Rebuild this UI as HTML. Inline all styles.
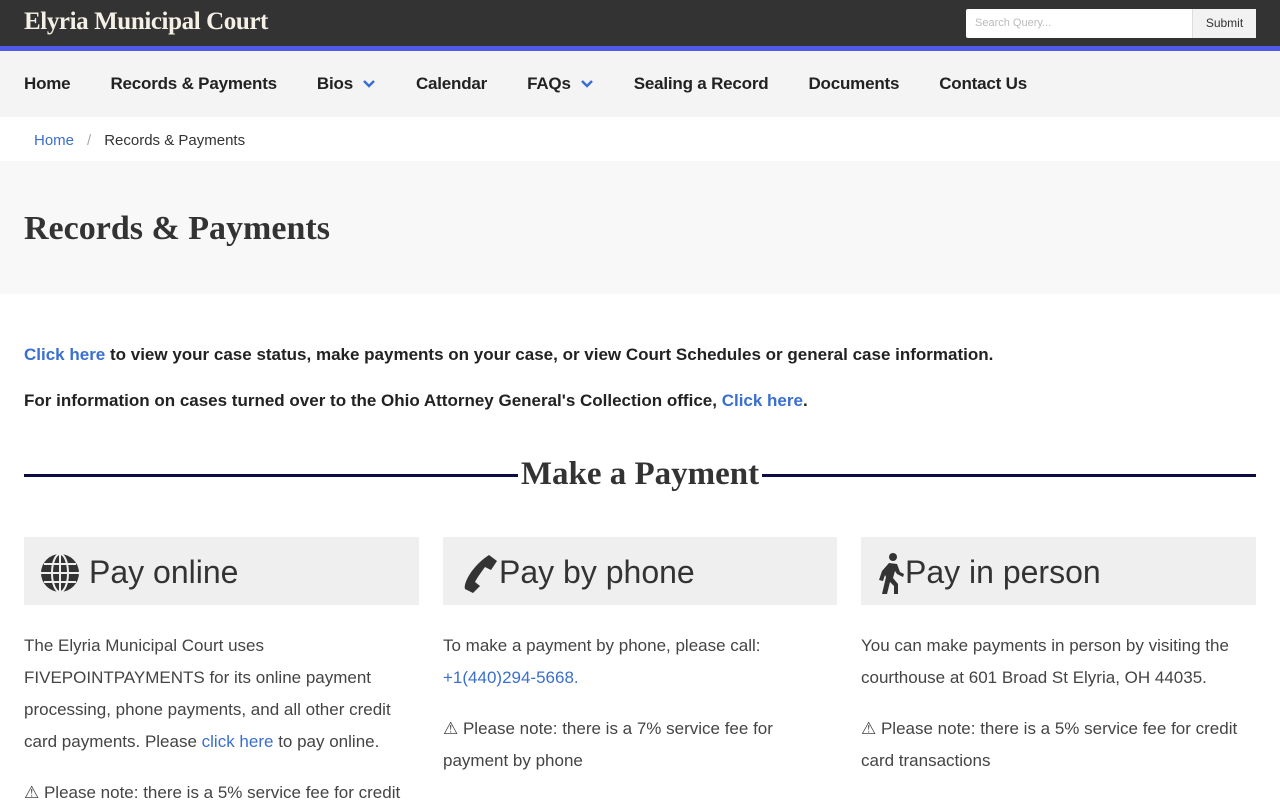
<!DOCTYPE html>
<html><head><meta charset="utf-8"><style>
*{box-sizing:border-box;margin:0;padding:0}
body{width:1280px;height:800px;overflow:hidden;font-family:"Liberation Sans",sans-serif;color:#333;background:#fff}
.top{height:46px;background:#333;position:relative}
.top h1{position:absolute;left:24px;top:8px;font:bold 25px "Liberation Serif",serif;color:#f5f0e6;letter-spacing:-0.4px}
.search{position:absolute;left:966px;top:9px;width:290px;height:29px;background:#fff;border-radius:2px}
.search span{position:absolute;left:9px;top:8px;font-size:11px;color:#bbb}
.search b{position:absolute;right:0;top:0;width:64px;height:29px;background:#f2f2f2;font-weight:normal;font-size:12px;color:#333;text-align:center;line-height:29px;border-left:1px solid #ddd}
.bar{height:5px;background:#4f5be8}
nav{height:66px;background:#f4f4f4;display:flex;align-items:center;padding-left:24px}
nav a{font-weight:bold;font-size:17px;color:#222;margin-right:40px;display:flex;align-items:center;letter-spacing:-0.2px}
nav svg{margin-left:9px}
.bc{height:44px;padding:15px 0 0 34px;font-size:15px}
.bc a{color:#3a6fd0}
.bc i{font-style:normal;color:#aaa;margin:0 13px}
.hero{height:133px;background:#f8f8f8;padding:49px 24px}
.hero h2{font:bold 34px "Liberation Serif",serif;color:#333}
p.l{font-weight:bold;font-size:17px;color:#222;position:absolute;left:24px}
a{color:#3a6fd0;text-decoration:none}
.mk{position:absolute;left:24px;top:458px;width:1232px;height:36px}
.mk hr{position:absolute;top:16px;height:3px;background:#0d0d44;border:0}
.mk h3{position:absolute;left:0;width:100%;text-align:center;font:bold 33px "Liberation Serif",serif;color:#333;top:-2px}
.col{position:absolute;top:537px;width:395px}
.hd{height:68px;background:#efefef;display:flex;align-items:center;padding-left:16px;font-size:32px;color:#333;padding-top:3px}
.col p{font-size:17px;line-height:32px;color:#444;margin-top:25px}
</style></head><body>
<div class="top"><h1>Elyria Municipal Court</h1><div class="search"><span>Search Query...</span><b>Submit</b></div></div>
<div class="bar"></div>
<nav><a>Home</a><a>Records &amp; Payments</a><a>Bios<svg width="14" height="10" viewBox="0 0 14 10"><path d="M2 2l5 5 5-5" stroke="#3a6fd0" stroke-width="2.5" fill="none"/></svg></a><a>Calendar</a><a>FAQs<svg width="14" height="10" viewBox="0 0 14 10"><path d="M2 2l5 5 5-5" stroke="#3a6fd0" stroke-width="2.5" fill="none"/></svg></a><a>Sealing a Record</a><a>Documents</a><a>Contact Us</a></nav>
<div class="bc"><a>Home</a><i>/</i>Records &amp; Payments</div>
<div class="hero"><h2>Records &amp; Payments</h2></div>
<p class="l" style="top:345px"><a>Click here</a> to view your case status, make payments on your case, or view Court Schedules or general case information.</p>
<p class="l" style="top:391px">For information on cases turned over to the Ohio Attorney General's Collection office, <a>Click here</a>.</p>
<div class="mk"><hr style="left:0;width:494px"><hr style="left:738px;width:494px"><h3>Make a Payment</h3></div>
<div class="col" style="left:24px"><div class="hd"><svg width="40" height="40" viewBox="0 0 40 40" style="margin-right:9px"><circle cx="20" cy="20" r="19" fill="#333"/><g stroke="#efefef" stroke-width="2" fill="none"><ellipse cx="20" cy="20" rx="8" ry="19"/><path d="M20 1v38M1 20h38M4 11h32M4 29h32"/></g></svg>Pay online</div>
<p>The Elyria Municipal Court uses FIVEPOINTPAYMENTS for its online payment processing, phone payments, and all other credit card payments. Please <a>click here</a> to pay online.</p>
<p style="margin-top:19px">⚠ Please note: there is a 5% service fee for credit</p></div>
<div class="col" style="left:443px;width:394px"><div class="hd"><svg width="40" height="40" viewBox="0 0 40 40"><path d="M30 2l8 6-6 9-6-3c-3 4-8 11-10 15l5 4-7 7-8-4C4 30 14 12 30 2z" fill="#333"/></svg>Pay by phone</div>
<p>To make a payment by phone, please call: <a>+1(440)294-5668.</a></p>
<p style="margin-top:19px">⚠ Please note: there is a 7% service fee for payment by phone</p></div>
<div class="col" style="left:861px"><div class="hd"><svg width="28" height="42" viewBox="0 0 28 42"><circle cx="16" cy="5" r="4" fill="#333"/><path d="M12 11l8 1 3 8 4 2-1 3-6-3-2-3-2 7 5 6v10h-4v-8l-4-4-3 12H5l4-17-1-2-2 6-4-1 3-9z" fill="#333"/></svg>Pay in person</div>
<p>You can make payments in person by visiting the courthouse at 601 Broad St Elyria, OH 44035.</p>
<p style="margin-top:19px">⚠ Please note: there is a 5% service fee for credit card transactions</p></div>
</body></html>
